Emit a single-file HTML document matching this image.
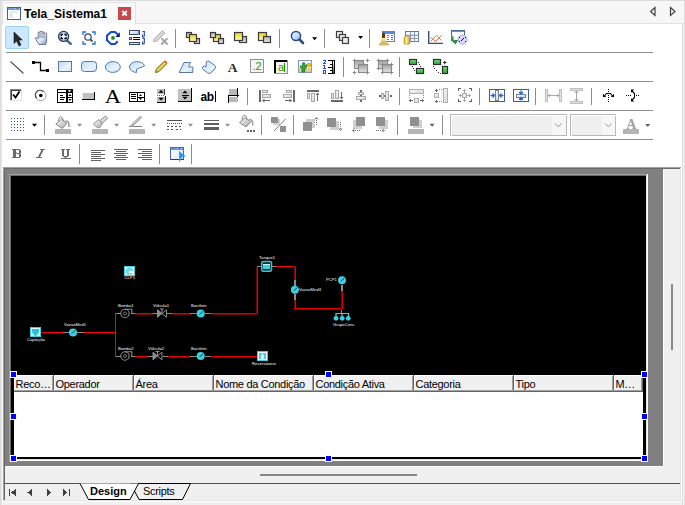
<!DOCTYPE html>
<html><head><meta charset="utf-8"><style>
html,body{margin:0;padding:0;width:685px;height:505px;overflow:hidden;background:#f0f0f0}
svg{position:absolute;left:0;top:0}
</style></head><body>
<svg width="685" height="505" viewBox="0 0 685 505" shape-rendering="crispEdges">
<rect x="0" y="0" width="685" height="505" fill="#f0f0f0" />
<rect x="0" y="0" width="1" height="505" fill="#dcdcdc" />
<rect x="1" y="0" width="1" height="505" fill="#e8e8e8" />
<rect x="2" y="0" width="1" height="505" fill="#f8f8f8" />
<rect x="0" y="0" width="685" height="1" fill="#dcdcdc" />
<rect x="3" y="1" width="681" height="22" fill="#f7f7f7" />
<rect x="3" y="23" width="681" height="1" fill="#e3e3e3" />
<rect x="3" y="2" width="132" height="23" fill="#f9f9f9" />
<rect x="2" y="2" width="1" height="23" fill="#e2e2e2" />
<rect x="2" y="2" width="134" height="1" fill="#e6e6e6" />
<rect x="135" y="2" width="1" height="23" fill="#e2e2e2" />
<rect x="682" y="24" width="1" height="481" fill="#dcdcdc" />
<rect x="683" y="24" width="1" height="481" fill="#f4f4f4" />
<rect x="684" y="0" width="1" height="505" fill="#e0e0e0" />
<rect x="3" y="24" width="679" height="143" fill="#ffffff" />
<rect x="6" y="52" width="647" height="1" fill="#8c8c8c" />
<rect x="6" y="81" width="647" height="1" fill="#8c8c8c" />
<rect x="6" y="110" width="647" height="1" fill="#8c8c8c" />
<rect x="6" y="139" width="647" height="1" fill="#8c8c8c" />
<rect x="3" y="167" width="678" height="334" fill="#f0f0f0" />
<rect x="3" y="167" width="678" height="1" fill="#a0a0a0" />
<rect x="3" y="167" width="1" height="334" fill="#a0a0a0" />
<rect x="4" y="168" width="676" height="1" fill="#696969" />
<rect x="4" y="168" width="1" height="332" fill="#696969" />
<rect x="5" y="169" width="658" height="297" fill="#808080" />
<rect x="663" y="169" width="1" height="298" fill="#ffffff" />
<rect x="5" y="466" width="659" height="1" fill="#ffffff" />
<rect x="9" y="174" width="639" height="1" fill="#a0a0a0" />
<rect x="9" y="174" width="1" height="287" fill="#a0a0a0" />
<rect x="10" y="175" width="637" height="1" fill="#696969" />
<rect x="10" y="175" width="1" height="285" fill="#696969" />
<rect x="10" y="460" width="638" height="1" fill="#ffffff" />
<rect x="647" y="174" width="1" height="287" fill="#ffffff" />
<rect x="11" y="459" width="636" height="1" fill="#e3e3e3" />
<rect x="646" y="175" width="1" height="285" fill="#e3e3e3" />
<rect x="11" y="176" width="635" height="283" fill="#000000" />
<rect x="664" y="169" width="16" height="297" fill="#f0f0f0" />
<rect x="671" y="284" width="2" height="66" fill="#888888" />
<rect x="5" y="467" width="675" height="16" fill="#f0f0f0" />
<rect x="260" y="474" width="157" height="2" fill="#888888" />
<rect x="5" y="483" width="676" height="1" fill="#505050" />
<rect x="680" y="169" width="1" height="332" fill="#e3e3e3" />
<rect x="681" y="167" width="1" height="335" fill="#ffffff" />
<rect x="3" y="500" width="679" height="1" fill="#e3e3e3" />
<rect x="3" y="501" width="679" height="1" fill="#ffffff" />
<rect x="14" y="375" width="629" height="17" fill="#f0f0f0" />
<rect x="14" y="375" width="629" height="1" fill="#ffffff" />
<rect x="14" y="375" width="1" height="16" fill="#ffffff" />
<rect x="52" y="376" width="1" height="15" fill="#a0a0a0" />
<rect x="53" y="375" width="1" height="17" fill="#646464" />
<rect x="54" y="375" width="1" height="16" fill="#ffffff" />
<rect x="132" y="376" width="1" height="15" fill="#a0a0a0" />
<rect x="133" y="375" width="1" height="17" fill="#646464" />
<rect x="134" y="375" width="1" height="16" fill="#ffffff" />
<rect x="212" y="376" width="1" height="15" fill="#a0a0a0" />
<rect x="213" y="375" width="1" height="17" fill="#646464" />
<rect x="214" y="375" width="1" height="16" fill="#ffffff" />
<rect x="312" y="376" width="1" height="15" fill="#a0a0a0" />
<rect x="313" y="375" width="1" height="17" fill="#646464" />
<rect x="314" y="375" width="1" height="16" fill="#ffffff" />
<rect x="412" y="376" width="1" height="15" fill="#a0a0a0" />
<rect x="413" y="375" width="1" height="17" fill="#646464" />
<rect x="414" y="375" width="1" height="16" fill="#ffffff" />
<rect x="512" y="376" width="1" height="15" fill="#a0a0a0" />
<rect x="513" y="375" width="1" height="17" fill="#646464" />
<rect x="514" y="375" width="1" height="16" fill="#ffffff" />
<rect x="612" y="376" width="1" height="15" fill="#a0a0a0" />
<rect x="613" y="375" width="1" height="17" fill="#646464" />
<rect x="614" y="375" width="1" height="16" fill="#ffffff" />
<rect x="641" y="376" width="1" height="15" fill="#a0a0a0" />
<rect x="642" y="375" width="1" height="17" fill="#646464" />
<rect x="14" y="390" width="628" height="1" fill="#a0a0a0" />
<rect x="14" y="391" width="629" height="1" fill="#646464" />
<rect x="14" y="392" width="629" height="65" fill="#ffffff" />
<g shape-rendering="auto">
<rect x="7" y="7" width="14" height="13" fill="#4a5f7e" />
<rect x="8" y="8" width="12" height="2" fill="#6f9be0" />
<rect x="8" y="10" width="12" height="9" fill="#ffffff" />
<path d="M9 18 L9 11 L18 11 L18 13 L13 13 L13 18 Z" fill="#e4ebf7"/>
<rect x="15" y="8" width="1" height="1" fill="#f4d040" />
<rect x="17" y="8" width="1" height="1" fill="#e02020" />
<rect x="19" y="8" width="1" height="1" fill="#f4d040" />
</g>
<text x="24" y="18" font-family="Liberation Sans, sans-serif" font-size="12" font-weight="bold" fill="#000" textLength="83" lengthAdjust="spacing">Tela_Sistema1</text>
<rect x="118" y="7" width="13" height="13" fill="#c9484a" />
<path d="M122.3 11 L126.8 15.5 M126.8 11 L122.3 15.5" stroke="#fff" stroke-width="1.8" shape-rendering="auto"/>
<path d="M655 7.5 L650.5 11.5 L655 15.5 Z" fill="none" stroke="#404040" stroke-width="1.2" shape-rendering="auto"/>
<path d="M670.5 7.5 L675 11.5 L670.5 15.5 Z" fill="none" stroke="#404040" stroke-width="1.2" shape-rendering="auto"/>
<text x="15.5" y="388" font-family="Liberation Sans, sans-serif" font-size="11" font-weight="normal" fill="#000" letter-spacing="-0.3">Reco…</text>
<text x="55.5" y="388" font-family="Liberation Sans, sans-serif" font-size="11" font-weight="normal" fill="#000" letter-spacing="-0.3">Operador</text>
<text x="135.5" y="388" font-family="Liberation Sans, sans-serif" font-size="11" font-weight="normal" fill="#000" letter-spacing="-0.3">Área</text>
<text x="215.5" y="388" font-family="Liberation Sans, sans-serif" font-size="11" font-weight="normal" fill="#000" letter-spacing="-0.3">Nome da Condição</text>
<text x="315.5" y="388" font-family="Liberation Sans, sans-serif" font-size="11" font-weight="normal" fill="#000" letter-spacing="-0.3">Condição Ativa</text>
<text x="415.5" y="388" font-family="Liberation Sans, sans-serif" font-size="11" font-weight="normal" fill="#000" letter-spacing="-0.3">Categoria</text>
<text x="515.5" y="388" font-family="Liberation Sans, sans-serif" font-size="11" font-weight="normal" fill="#000" letter-spacing="-0.3">Tipo</text>
<text x="615.5" y="388" font-family="Liberation Sans, sans-serif" font-size="11" font-weight="normal" fill="#000" letter-spacing="-0.3">M…</text>
<rect x="10" y="371" width="7" height="7" fill="#ffffff" />
<rect x="11" y="372" width="5" height="5" fill="#0000ff" />
<rect x="10" y="413" width="7" height="7" fill="#ffffff" />
<rect x="11" y="414" width="5" height="5" fill="#0000ff" />
<rect x="10" y="455" width="7" height="7" fill="#ffffff" />
<rect x="11" y="456" width="5" height="5" fill="#0000ff" />
<rect x="325" y="371" width="7" height="7" fill="#ffffff" />
<rect x="326" y="372" width="5" height="5" fill="#0000ff" />
<rect x="325" y="455" width="7" height="7" fill="#ffffff" />
<rect x="326" y="456" width="5" height="5" fill="#0000ff" />
<rect x="641" y="371" width="7" height="7" fill="#ffffff" />
<rect x="642" y="372" width="5" height="5" fill="#0000ff" />
<rect x="641" y="413" width="7" height="7" fill="#ffffff" />
<rect x="642" y="414" width="5" height="5" fill="#0000ff" />
<rect x="641" y="455" width="7" height="7" fill="#ffffff" />
<rect x="642" y="456" width="5" height="5" fill="#0000ff" />
<g fill="#404040">
<rect x="9" y="489" width="1" height="7" fill="#404040" />
<path d="M15.5 489 L11 492.5 L15.5 496 Z"/>
<path d="M32 489 L27.5 492.5 L32 496 Z"/>
<path d="M47 489 L51.5 492.5 L47 496 Z"/>
<path d="M63 489 L67.5 492.5 L63 496 Z"/>
<rect x="69" y="489" width="1" height="7" fill="#404040" />
</g>
<path d="M130.5 483.5 L190.5 483.5 L182.5 499.5 L139 499.5 Z" fill="#f0f0f0" stroke="#000" stroke-width="1" shape-rendering="auto"/>
<rect x="5" y="483" width="75" height="1" fill="#505050" />
<path d="M80 483.5 L88.5 499.5 L130 499.5 L138.5 483.5" fill="#ffffff" stroke="#000" stroke-width="1" shape-rendering="auto"/>
<text x="90" y="495" font-family="Liberation Sans, sans-serif" font-size="11" font-weight="bold" fill="#000" >Design</text>
<text x="143" y="495" font-family="Liberation Sans, sans-serif" font-size="11" font-weight="normal" fill="#000" letter-spacing="-0.3">Scripts</text>
<defs>
<linearGradient id="gy" x1="0" y1="0" x2="0" y2="1"><stop offset="0" stop-color="#e8d000"/><stop offset="1" stop-color="#fffbc8"/></linearGradient>
<linearGradient id="gg" x1="0" y1="0" x2="0" y2="1"><stop offset="0" stop-color="#a8a8a8"/><stop offset="1" stop-color="#ececec"/></linearGradient>
<linearGradient id="gb" x1="0" y1="0" x2="1" y2="1"><stop offset="0" stop-color="#b8d8f8"/><stop offset="0.6" stop-color="#e8f4ff"/><stop offset="1" stop-color="#c8e0f8"/></linearGradient>
<linearGradient id="ghand" x1="0" y1="0" x2="1" y2="1"><stop offset="0" stop-color="#ffffff"/><stop offset="0.55" stop-color="#e8eef8"/><stop offset="1" stop-color="#7890c0"/></linearGradient>
<linearGradient id="grul" x1="0" y1="0" x2="0" y2="1"><stop offset="0" stop-color="#ffffff"/><stop offset="1" stop-color="#2050d0"/></linearGradient>
<linearGradient id="gbell" x1="0" y1="0" x2="0" y2="1"><stop offset="0" stop-color="#fff4b0"/><stop offset="1" stop-color="#d8b850"/></linearGradient>
<linearGradient id="gcyl" x1="0" y1="0" x2="1" y2="0"><stop offset="0" stop-color="#d8a820"/><stop offset="0.4" stop-color="#fff0a0"/><stop offset="1" stop-color="#c89818"/></linearGradient>
<linearGradient id="gg2" x1="0" y1="0" x2="0" y2="1"><stop offset="0" stop-color="#a0a0a0"/><stop offset="1" stop-color="#e4e4e4"/></linearGradient>
<linearGradient id="gbk" x1="0" y1="0" x2="1" y2="1"><stop offset="0" stop-color="#ffffff"/><stop offset="1" stop-color="#a8a8a8"/></linearGradient>
<linearGradient id="gwin" x1="0" y1="0" x2="1" y2="1"><stop offset="0" stop-color="#ffffff"/><stop offset="1" stop-color="#dde4f4"/></linearGradient>
<linearGradient id="galn" x1="0" y1="0" x2="1" y2="1"><stop offset="0" stop-color="#fafafa"/><stop offset="1" stop-color="#d4d4d4"/></linearGradient>
<linearGradient id="gstk" x1="0" y1="0" x2="1" y2="1"><stop offset="0" stop-color="#ffffff"/><stop offset="1" stop-color="#d0d0d0"/></linearGradient>
<radialGradient id="gzm" cx="0.5" cy="0.5" r="0.5"><stop offset="0" stop-color="#ffffff"/><stop offset="1" stop-color="#b8c8f0"/></radialGradient>
<linearGradient id="glst" x1="0" y1="0" x2="1" y2="1"><stop offset="0" stop-color="#ffffff"/><stop offset="1" stop-color="#a8c4ec"/></linearGradient>
<linearGradient id="gb2" x1="0" y1="0" x2="0" y2="1"><stop offset="0" stop-color="#ffffff"/><stop offset="1" stop-color="#a8c0e0"/></linearGradient>
<linearGradient id="gmag" x1="0" y1="0" x2="1" y2="1"><stop offset="0" stop-color="#ffffff"/><stop offset="1" stop-color="#90b8f0"/></linearGradient>
<linearGradient id="ggr" x1="0" y1="0" x2="0" y2="1"><stop offset="0" stop-color="#80e080"/><stop offset="1" stop-color="#30a030"/></linearGradient>
</defs>
<rect x="5.5" y="26.5" width="23" height="22" rx="2" fill="#cce8ff" stroke="#99d1ff"/>
<path d="M14 32 L14 43.5 L16.6 41 L19 46 L21 45 L18.7 40 L22.3 40 Z" fill="#2a2a2a" stroke="#101010" stroke-width="0.6" shape-rendering="auto"/>
<path d="M39 44.5 L35.3 38.6 L35.9 37.3 L38.2 38.9 V32.4 Q39 31.6 39.9 32.4 V31.6 Q40.9 30.8 41.9 31.6 V32.1 Q42.9 31.4 43.9 32.1 V33.2 Q45.1 32.6 46.6 33.4 V42 L45.5 44.5 Z" fill="url(#ghand)" stroke="#5a6a84" stroke-width="0.9" shape-rendering="auto"/>
<path d="M40 32.5 V38 M42 32.2 V38 M44 33.2 V38" stroke="#5a6a84" stroke-width="0.8" shape-rendering="auto"/>
<path d="M67 40.5 L70.8 44" stroke="#4a6a9a" stroke-width="2.4" stroke-linecap="round" shape-rendering="auto"/>
<circle cx="63.6" cy="36.4" r="5" fill="url(#gzm)" stroke="#2a3a68" stroke-width="1.3" shape-rendering="auto"/>
<path d="M61.3 36 V34.3 H63 M64.3 34.3 H66 V36 M66 37 V38.7 H64.3 M63 38.7 H61.3 V37" stroke="#000" stroke-width="1.3" fill="none" shape-rendering="auto"/>
<path d="M83 35 V32 H86 M92 32 H95 V35 M95 41 V44 H92 M86 44 H83 V41" stroke="#1a70e0" stroke-width="1.3" fill="none" shape-rendering="auto"/>
<circle cx="88" cy="37" r="3.2" fill="#f0f4fa" stroke="#404a60" stroke-width="1.2" shape-rendering="auto"/>
<path d="M90.3 39.3 L92.5 41.5" stroke="#404a60" stroke-width="1.8" shape-rendering="auto"/>
<path d="M117.8 41.3 L115 44 H111 L107 40.3 V35.5 L111 32 H115 L118 34.6" stroke="#1a44e0" stroke-width="2" fill="none" shape-rendering="auto"/>
<path d="M119.8 32.3 V36.9 H115.3 Z" fill="#061a90" shape-rendering="auto"/>
<circle cx="113" cy="37.9" r="1.9" fill="#109020" shape-rendering="auto"/>
<rect x="129.5" y="30.5" width="10" height="4" fill="url(#glst)" stroke="#3a4a6a" stroke-width="1"/>
<rect x="138" y="31" width="1" height="4" fill="#8090a8" />
<rect x="129" y="37" width="3" height="3" fill="#3a4a6a" />
<rect x="130" y="38" width="1" height="1" fill="#d0d8e8" />
<rect x="133" y="37" width="7" height="1" fill="#000" />
<rect x="133" y="39" width="7" height="1" fill="#000" />
<rect x="129.5" y="42.5" width="10" height="2" fill="url(#glst)" stroke="#3a4a6a" stroke-width="1"/>
<path d="M142.5 31.5 H144.3 V36.5 M142.5 34.5 V37 H144.3 M142.5 38.5 H144.3 V43.5 M142.5 41.5 V44 H144.3" stroke="#1a40a0" stroke-width="1.1" fill="none" shape-rendering="auto"/>
<path d="M153.4 41.6 L154.1 38.7 L162.4 30.5 L165 33.1 L156.7 41.3 Z" fill="#d4d4d4" stroke="#a8a8a8" stroke-width="0.8" shape-rendering="auto"/>
<path d="M161.3 38.2 L167.6 44.5 M167.6 38.2 L161.3 44.5" stroke="#a4a4a4" stroke-width="1.9" shape-rendering="auto"/>
<rect x="175" y="29" width="1" height="19" fill="#8c8c8c" />
<rect x="186.5" y="32.5" width="5" height="5" fill="url(#gg)" stroke="#3a3a3a" stroke-width="1.2" shape-rendering="auto"/>
<rect x="194.5" y="38.5" width="5" height="5" fill="url(#gg)" stroke="#3a3a3a" stroke-width="1.2" shape-rendering="auto"/>
<rect x="189.5" y="34.5" width="7" height="7" fill="url(#gy)" stroke="#3a3a3a" stroke-width="1.2" shape-rendering="auto"/>
<rect x="213.5" y="34.5" width="7" height="7" fill="url(#gy)" stroke="#3a3a3a" stroke-width="1.2" shape-rendering="auto"/>
<rect x="210.5" y="32.5" width="5" height="5" fill="url(#gg)" stroke="#3a3a3a" stroke-width="1.2" shape-rendering="auto"/>
<rect x="218.5" y="38.5" width="5" height="5" fill="url(#gg)" stroke="#3a3a3a" stroke-width="1.2" shape-rendering="auto"/>
<rect x="239.5" y="36.5" width="7" height="6" fill="url(#gg)" stroke="#3a3a3a" stroke-width="1.2" shape-rendering="auto"/>
<rect x="234.5" y="32.5" width="8" height="8" fill="url(#gy)" stroke="#3a3a3a" stroke-width="1.2" shape-rendering="auto"/>
<rect x="258.5" y="32.5" width="8" height="8" fill="url(#gy)" stroke="#3a3a3a" stroke-width="1.2" shape-rendering="auto"/>
<rect x="263.5" y="36.5" width="7" height="6" fill="url(#gg)" stroke="#3a3a3a" stroke-width="1.2" shape-rendering="auto"/>
<rect x="279" y="29" width="1" height="19" fill="#8c8c8c" />
<circle cx="296" cy="36" r="4.6" fill="url(#gmag)" stroke="#2a4a8a" stroke-width="1.5" shape-rendering="auto"/>
<path d="M299.5 39.5 L303 43" stroke="#2a4a8a" stroke-width="2.6" stroke-linecap="round" shape-rendering="auto"/>
<path d="M312.1 37.2 L317.1 37.2 L314.6 40.2 Z" fill="#000" shape-rendering="auto"/>
<rect x="324" y="29" width="1" height="19" fill="#8c8c8c" />
<rect x="336.5" y="31.5" width="6" height="6" fill="url(#gstk)" stroke="#404040" stroke-width="1.2" shape-rendering="auto"/>
<rect x="339.5" y="34.5" width="6" height="6" fill="url(#gstk)" stroke="#404040" stroke-width="1.2" shape-rendering="auto"/>
<rect x="342.5" y="37.5" width="6" height="6" fill="url(#gstk)" stroke="#404040" stroke-width="1.2" shape-rendering="auto"/>
<path d="M358.1 36.0 L363.1 36.0 L360.6 39.0 Z" fill="#000" shape-rendering="auto"/>
<rect x="369" y="29" width="1" height="19" fill="#8c8c8c" />
<rect x="382.5" y="31.5" width="12" height="10" fill="#ffffff" stroke="#7080a8" stroke-width="1"/>
<rect x="383" y="32" width="11" height="2" fill="#5a8ae0" />
<rect x="387" y="35" width="2" height="1" fill="#f05030" />
<rect x="391" y="35" width="2" height="1" fill="#f05030" />
<rect x="387" y="37" width="2" height="1" fill="#f05030" />
<rect x="391" y="37" width="2" height="1" fill="#3070e0" />
<rect x="387" y="39" width="2" height="1" fill="#f05030" />
<rect x="391" y="39" width="2" height="1" fill="#f05030" />
<rect x="387" y="37" width="2" height="1" fill="#80a8e0" />
<path d="M382 38.5 V33.5 Q383.5 31.5 385 33.5 V38.5 Z" fill="#70300a" shape-rendering="auto"/>
<path d="M381 38 H386 V43 H381 Z" fill="url(#gbell)" shape-rendering="auto"/>
<path d="M379 45 Q379.5 43 381 43 H386 Q388.5 43 389 45 Z" fill="#e0c870" stroke="#b09040" stroke-width="0.5" shape-rendering="auto"/>
<rect x="405.5" y="31.5" width="13" height="10" fill="#d8e4f8" stroke="#6a7a9a" stroke-width="1"/>
<rect x="410" y="32" width="1" height="10" fill="#8a9ac0" />
<rect x="414" y="32" width="1" height="10" fill="#8a9ac0" />
<rect x="406" y="35" width="13" height="1" fill="#8a9ac0" />
<rect x="406" y="38" width="13" height="1" fill="#8a9ac0" />
<rect x="406" y="32" width="4" height="2" fill="#f4f8ff" />
<rect x="406" y="36" width="4" height="2" fill="#f4f8ff" />
<rect x="406" y="39" width="4" height="2" fill="#f4f8ff" />
<rect x="411" y="32" width="3" height="2" fill="#f4f8ff" />
<rect x="411" y="36" width="3" height="2" fill="#f4f8ff" />
<rect x="411" y="39" width="3" height="2" fill="#f4f8ff" />
<rect x="415" y="32" width="3" height="2" fill="#f4f8ff" />
<rect x="415" y="36" width="3" height="2" fill="#f4f8ff" />
<rect x="415" y="39" width="3" height="2" fill="#f4f8ff" />
<path d="M404 37 Q407 35.5 410 37 V43.8 Q407 45 404 43.8 Z" fill="url(#gcyl)" stroke="#b89020" stroke-width="0.6" shape-rendering="auto"/>
<path d="M428.7 31 V43.4 H443" stroke="#3a5070" stroke-width="1.4" fill="none" shape-rendering="auto"/>
<path d="M430.5 37.3 L435.5 41.5 L441.5 35.3" stroke="#f05030" stroke-width="0.9" fill="none" shape-rendering="auto"/>
<path d="M430.5 41.5 L436.5 35.3 L441.5 40.3" stroke="#50c020" stroke-width="0.9" fill="none" shape-rendering="auto"/>
<rect x="451.5" y="30.5" width="13" height="10" fill="#ffffff" stroke="#4a68a0" stroke-width="1"/>
<rect x="452" y="31" width="12" height="1" fill="#6a90d8" />
<path d="M452.5 36 V39 Q453 42 455.5 42.5" stroke="#40a040" stroke-width="2" fill="none" shape-rendering="auto"/>
<path d="M453 41 L458 40.5 L455.5 44.5 Z" fill="#309030" shape-rendering="auto"/>
<circle cx="462.5" cy="39.6" r="4.6" fill="#d8d8f8" stroke="#a8a8e0" stroke-width="1" shape-rendering="auto"/>
<path d="M461 41 L464 38" stroke="#101010" stroke-width="1" shape-rendering="auto"/>
<rect x="459" y="37" width="1" height="1" fill="#202020" />
<rect x="465" y="37" width="1" height="1" fill="#202020" />
<rect x="459" y="41" width="1" height="1" fill="#202020" />
<rect x="465" y="41" width="1" height="1" fill="#202020" />
<path d="M10.5 61.5 L23.5 73.5" stroke="#505050" stroke-width="1.1" shape-rendering="auto"/>
<path d="M34 62.5 H40.5 V70.5 H47" stroke="#000" stroke-width="1.3" fill="none" shape-rendering="auto"/>
<rect x="32" y="61" width="3" height="3" fill="#000" />
<rect x="46" y="69" width="3" height="3" fill="#000" />
<rect x="58.5" y="61.5" width="13" height="10" fill="url(#gb)" stroke="#5878a8" stroke-width="1" shape-rendering="auto"/>
<rect x="81.5" y="61.5" width="15" height="10" rx="3" fill="url(#gb)" stroke="#5878a8" stroke-width="1" shape-rendering="auto"/>
<ellipse cx="112.8" cy="67" rx="7.5" ry="5.4" fill="url(#gb)" stroke="#5878a8" stroke-width="1" shape-rendering="auto"/>
<path d="M144.5 66 A7.6 5.4 0 1 0 136.6 72.4 L136.6 69 Z" fill="url(#gb)" stroke="#5878a8" stroke-width="1" shape-rendering="auto"/>
<path d="M155.5 72.5 L156.3 69.2 L164.2 61.3 L166.7 63.8 L158.8 71.7 Z" fill="#f0d040" stroke="#505020" stroke-width="0.9" shape-rendering="auto"/>
<path d="M164.2 61.3 L165.2 60.3 L167.7 62.8 L166.7 63.8 Z" fill="#e06050" shape-rendering="auto"/>
<path d="M184 62.5 H190.5 L188.5 67 H192.8 V72.5 H179.2 Z" fill="url(#gb)" stroke="#5878a8" stroke-width="1" shape-rendering="auto"/>
<path d="M206.3 62.2 Q207 60.3 208.8 61.2 L214.6 65.3 Q216.6 67 214.7 69.4 L210.8 72.8 Q209.2 74.2 207.6 72.8 L203.2 69.6 Q201.6 68.2 203 66.6 Q204.6 65.6 206 66.8 Z" fill="url(#gb)" stroke="#5878a8" stroke-width="1" shape-rendering="auto"/>
<text x="232.7" y="71.6" font-family="Liberation Serif" font-weight="bold" font-size="13.5" fill="#2a2a2a" text-anchor="middle">A</text>
<rect x="250.5" y="59.5" width="13" height="13" fill="#f4f4f4" stroke="#909090" stroke-width="1"/>
<text x="257" y="70" font-family="Liberation Sans" font-size="11" fill="#10a010" text-anchor="middle">.2</text>
<rect x="274" y="60" width="14" height="14" fill="#f4f4f4" />
<rect x="274" y="60" width="14" height="2" fill="#000" />
<rect x="274" y="60" width="2" height="14" fill="#000" />
<rect x="287" y="60" width="1" height="14" fill="#909090" />
<rect x="274" y="73" width="14" height="1" fill="#909090" />
<text x="278" y="71" font-family="Liberation Sans" font-size="11" fill="#10a010">a</text>
<rect x="284" y="63" width="1" height="9" fill="#10a010" />
<rect x="298.5" y="60.5" width="13" height="12" fill="#f4f6fc" stroke="#8898b8" stroke-width="1"/>
<rect x="299" y="68" width="12" height="4" fill="#e4cc88" />
<path d="M302 72 V68.5 Q300 68 300.3 65.5 Q301.5 66.5 302.5 66.5 V63 Q303.5 61.8 304.8 63 V66 Q306 65.5 306.5 64.5 Q307.5 67.5 304.8 69 V72 Z" fill="#30a838" stroke="#107020" stroke-width="0.7" shape-rendering="auto"/>
<circle cx="309" cy="65" r="1.9" fill="#f0c020" stroke="#b08818" stroke-width="0.5" shape-rendering="auto"/>
<rect x="323" y="60" width="3" height="1" fill="#1f4fd8" />
<rect x="325" y="61" width="1" height="1" fill="#1f4fd8" />
<rect x="324" y="62" width="1" height="1" fill="#1f4fd8" />
<rect x="323" y="63" width="3" height="1" fill="#1f4fd8" />
<rect x="324" y="65" width="1" height="4" fill="#1f4fd8" />
<rect x="323" y="65" width="1" height="1" fill="#1f4fd8" />
<rect x="323" y="68" width="3" height="1" fill="#1f4fd8" />
<rect x="323" y="70" width="3" height="1" fill="#1f4fd8" />
<rect x="323" y="73" width="3" height="1" fill="#1f4fd8" />
<rect x="323" y="70" width="1" height="4" fill="#1f4fd8" />
<rect x="325" y="70" width="1" height="4" fill="#1f4fd8" />
<rect x="328" y="60" width="7" height="1" fill="#000" />
<rect x="330" y="64" width="3" height="1" fill="#000" />
<rect x="328" y="67" width="5" height="1" fill="#000" />
<rect x="330" y="70" width="3" height="1" fill="#000" />
<rect x="328" y="73" width="7" height="1" fill="#000" />
<rect x="332" y="60" width="3" height="14" fill="#000" />
<rect x="333" y="61" width="1" height="12" fill="url(#grul)" />
<rect x="343" y="57" width="1" height="20" fill="#8c8c8c" />
<rect x="354.5" y="60.5" width="9" height="8" fill="url(#gg2)" stroke="#8a8a8a" stroke-width="1.2" shape-rendering="auto"/>
<rect x="358.5" y="64.5" width="9" height="8" fill="url(#gg2)" stroke="#8a8a8a" stroke-width="1.2" shape-rendering="auto"/>
<path d="M352.7 60.5 H356.3 M354.5 58.7 V62.3" stroke="#888" stroke-width="1" shape-rendering="auto"/>
<path d="M365.7 60.5 H369.3 M367.5 58.7 V62.3" stroke="#888" stroke-width="1" shape-rendering="auto"/>
<path d="M352.7 72.5 H356.3 M354.5 70.7 V74.3" stroke="#888" stroke-width="1" shape-rendering="auto"/>
<path d="M365.7 72.5 H369.3 M367.5 70.7 V74.3" stroke="#888" stroke-width="1" shape-rendering="auto"/>
<rect x="378.5" y="60.5" width="9" height="8" fill="url(#gg2)" stroke="#8a8a8a" stroke-width="1.2" shape-rendering="auto"/>
<rect x="382.5" y="64.5" width="9" height="8" fill="url(#gg2)" stroke="#8a8a8a" stroke-width="1.2" shape-rendering="auto"/>
<path d="M376.7 60.5 H380.3 M378.5 58.7 V62.3" stroke="#888" stroke-width="1" shape-rendering="auto"/>
<path d="M385.7 60.5 H389.3 M387.5 58.7 V62.3" stroke="#888" stroke-width="1" shape-rendering="auto"/>
<path d="M376.7 68.5 H380.3 M378.5 66.7 V70.3" stroke="#888" stroke-width="1" shape-rendering="auto"/>
<path d="M380.7 64.5 H384.3 M382.5 62.7 V66.3" stroke="#888" stroke-width="1" shape-rendering="auto"/>
<path d="M389.7 64.5 H393.3 M391.5 62.7 V66.3" stroke="#888" stroke-width="1" shape-rendering="auto"/>
<path d="M380.7 72.5 H384.3 M382.5 70.7 V74.3" stroke="#888" stroke-width="1" shape-rendering="auto"/>
<path d="M389.7 72.5 H393.3 M391.5 70.7 V74.3" stroke="#888" stroke-width="1" shape-rendering="auto"/>
<rect x="399" y="57" width="1" height="20" fill="#8c8c8c" />
<rect x="409.5" y="59.5" width="7" height="5" fill="url(#ggr)" stroke="#303030" stroke-width="1.2" shape-rendering="auto"/>
<rect x="416.5" y="68.5" width="7" height="5" fill="url(#ggr)" stroke="#303030" stroke-width="1.2" shape-rendering="auto"/>
<rect x="412" y="66" width="1" height="1" fill="#303030" />
<rect x="413" y="68" width="1" height="1" fill="#303030" />
<rect x="414" y="70" width="1" height="1" fill="#303030" />
<rect x="418" y="62" width="1" height="1" fill="#303030" />
<rect x="419" y="64" width="1" height="1" fill="#303030" />
<rect x="420" y="66" width="1" height="1" fill="#303030" />
<rect x="433.5" y="59.5" width="7" height="5" fill="url(#ggr)" stroke="#303030" stroke-width="1.2" shape-rendering="auto"/>
<rect x="442.5" y="66.5" width="5" height="7" fill="url(#ggr)" stroke="#303030" stroke-width="1.2" shape-rendering="auto"/>
<rect x="433" y="66" width="1" height="1" fill="#303030" />
<rect x="434" y="68" width="1" height="1" fill="#303030" />
<rect x="436" y="70" width="1" height="1" fill="#303030" />
<rect x="438" y="72" width="1" height="1" fill="#303030" />
<rect x="440" y="73" width="1" height="1" fill="#303030" />
<path d="M443 62.5 H446.5 M444.7 60.7 V64.3" stroke="#303030" stroke-width="1.1" shape-rendering="auto"/>
<rect x="10" y="89" width="12" height="12" fill="#ffffff" />
<rect x="10" y="89" width="12" height="1" fill="#808080" />
<rect x="10" y="89" width="1" height="12" fill="#808080" />
<rect x="11" y="90" width="10" height="1" fill="#404040" />
<rect x="11" y="90" width="1" height="10" fill="#404040" />
<rect x="10" y="100" width="12" height="1" fill="#e0e0e0" />
<rect x="21" y="89" width="1" height="12" fill="#e0e0e0" />
<path d="M13 94.5 L15.5 97.5 L19.5 91.5" stroke="#000" stroke-width="1.8" fill="none" shape-rendering="auto"/>
<circle cx="40.8" cy="95.5" r="5.2" fill="#fff" stroke="#a0a0a0" stroke-width="1" shape-rendering="auto"/>
<path d="M36.5 98 A4.5 4.5 0 0 1 43.5 91.8" stroke="#404040" stroke-width="1.2" fill="none" shape-rendering="auto"/>
<circle cx="40.8" cy="95.5" r="1.8" fill="#000" shape-rendering="auto"/>
<rect x="57" y="89" width="16" height="14" fill="#000" />
<rect x="58" y="90" width="8" height="2" fill="#ffffff" />
<path d="M67.6 90.2 H71.4 L69.5 92.2 Z" fill="#fff" shape-rendering="auto"/>
<rect x="58" y="93" width="8" height="9" fill="#ffffff" />
<rect x="60" y="95" width="3" height="1" fill="#000" />
<rect x="60" y="97" width="5" height="1" fill="#000" />
<rect x="60" y="99" width="4" height="1" fill="#000" />
<rect x="68" y="93" width="4" height="4" fill="#ffffff" />
<rect x="68" y="98" width="4" height="4" fill="#ffffff" />
<path d="M68.3 96 L70 94 L71.7 96 Z M68.3 99 L70 101 L71.7 99 Z" fill="#000" shape-rendering="auto"/>
<rect x="82" y="92" width="13" height="8" fill="#000" />
<rect x="83" y="93" width="11" height="6" fill="#c0c0c0" />
<rect x="82" y="92" width="12" height="1" fill="#ffffff" />
<rect x="82" y="92" width="1" height="7" fill="#e8e8e8" />
<text x="104.8" y="102.8" font-family="Liberation Serif" font-size="19.5" fill="#000" textLength="16.3" lengthAdjust="spacingAndGlyphs">A</text>
<rect x="129" y="92" width="16" height="10" fill="#000" />
<rect x="130" y="93" width="14" height="8" fill="#fff" />
<rect x="137" y="93" width="1" height="8" fill="#000" />
<rect x="131" y="94" width="5" height="1" fill="#000" />
<rect x="131" y="96" width="5" height="1" fill="#000" />
<rect x="131" y="98" width="5" height="1" fill="#000" />
<path d="M139 96 L140.5 94 L142 96 Z M139 98 L140.5 100 L142 98 Z" fill="#000" shape-rendering="auto"/>
<rect x="138" y="97" width="6" height="1" fill="#000" />
<rect x="157" y="89" width="8" height="5" fill="#c0c0c0" />
<rect x="164" y="89" width="1" height="6" fill="#404040" />
<path d="M158.3 92.8 L161 90 L163.7 92.8 Z" fill="#000" shape-rendering="auto"/>
<rect x="157" y="95" width="1" height="1" fill="#606060" />
<rect x="159" y="95" width="1" height="1" fill="#606060" />
<rect x="161" y="95" width="1" height="1" fill="#606060" />
<rect x="163" y="95" width="1" height="1" fill="#606060" />
<rect x="157" y="97" width="8" height="5" fill="#c0c0c0" />
<rect x="157" y="102" width="9" height="1" fill="#000" />
<rect x="165" y="96" width="1" height="7" fill="#000" />
<path d="M158.3 97.7 L161 100.5 L163.7 97.7 Z" fill="#000" shape-rendering="auto"/>
<rect x="178" y="89" width="13" height="12" fill="#c0c0c0" />
<rect x="191" y="88" width="1" height="14" fill="#000" />
<rect x="178" y="101" width="14" height="1" fill="#000" />
<path d="M182.3 93.3 L185 90.5 L187.7 93.3 Z M182.3 96.7 L185 99.5 L187.7 96.7 Z" fill="#000" shape-rendering="auto"/>
<rect x="182" y="95" width="7" height="1" fill="#000" />
<text x="200.5" y="101.2" font-family="Liberation Sans" font-weight="bold" font-size="12" fill="#000" letter-spacing="-0.4">ab</text>
<rect x="215" y="91" width="1" height="11" fill="#000" />
<rect x="229" y="89" width="8" height="6" fill="#b8b8b8" />
<rect x="237" y="88" width="1" height="9" fill="#000" />
<rect x="228" y="95" width="11" height="1" fill="#000" />
<rect x="229" y="97" width="9" height="5" fill="#b8b8b8" />
<rect x="228" y="95" width="1" height="8" fill="#000" />
<rect x="247" y="88" width="1" height="17" fill="#8c8c8c" />
<rect x="259" y="90" width="2" height="12" fill="#6a6a6a" />
<rect x="262.5" y="90.5" width="5" height="2" fill="url(#galn)" stroke="#a8a8a8" stroke-width="1"/>
<rect x="262.5" y="94.5" width="8" height="3" fill="url(#galn)" stroke="#a8a8a8" stroke-width="1"/>
<rect x="263" y="100" width="7" height="1" fill="#6a6a6a" />
<path d="M262 100.5 L264.5 98.5 V102.5 Z" fill="#6a6a6a" shape-rendering="auto"/>
<rect x="293" y="90" width="2" height="12" fill="#6a6a6a" />
<rect x="286.5" y="90.5" width="5" height="2" fill="url(#galn)" stroke="#a8a8a8" stroke-width="1"/>
<rect x="283.5" y="94.5" width="8" height="3" fill="url(#galn)" stroke="#a8a8a8" stroke-width="1"/>
<rect x="285" y="100" width="7" height="1" fill="#6a6a6a" />
<path d="M292 100.5 L289.5 98.5 V102.5 Z" fill="#6a6a6a" shape-rendering="auto"/>
<rect x="307" y="90" width="12" height="2" fill="#6a6a6a" />
<rect x="307.5" y="93.5" width="2" height="5" fill="url(#galn)" stroke="#a8a8a8" stroke-width="1"/>
<rect x="311.5" y="93.5" width="3" height="8" fill="url(#galn)" stroke="#a8a8a8" stroke-width="1"/>
<rect x="317" y="94" width="1" height="7" fill="#6a6a6a" />
<path d="M317.5 92.5 L315.5 95 H319.5 Z" fill="#6a6a6a" shape-rendering="auto"/>
<rect x="331" y="100" width="12" height="2" fill="#6a6a6a" />
<rect x="331.5" y="93.5" width="2" height="5" fill="url(#galn)" stroke="#a8a8a8" stroke-width="1"/>
<rect x="335.5" y="90.5" width="3" height="8" fill="url(#galn)" stroke="#a8a8a8" stroke-width="1"/>
<rect x="341" y="92" width="1" height="6" fill="#6a6a6a" />
<path d="M341.5 99.5 L339.5 97 H343.5 Z" fill="#6a6a6a" shape-rendering="auto"/>
<rect x="360" y="90" width="2" height="2" fill="#6a6a6a" />
<rect x="360" y="95" width="2" height="1" fill="#6a6a6a" />
<rect x="360" y="100" width="2" height="2" fill="#6a6a6a" />
<rect x="358.5" y="92.5" width="5" height="2" fill="url(#galn)" stroke="#a8a8a8" stroke-width="1"/>
<rect x="356.5" y="96.5" width="9" height="3" fill="url(#galn)" stroke="#a8a8a8" stroke-width="1"/>
<rect x="379" y="95" width="2" height="2" fill="#6a6a6a" />
<rect x="390" y="95" width="2" height="2" fill="#6a6a6a" />
<rect x="384" y="95" width="1" height="2" fill="#6a6a6a" />
<rect x="381.5" y="93.5" width="2" height="5" fill="url(#galn)" stroke="#a8a8a8" stroke-width="1"/>
<rect x="385.5" y="91.5" width="3" height="9" fill="url(#galn)" stroke="#a8a8a8" stroke-width="1"/>
<rect x="399" y="88" width="1" height="17" fill="#8c8c8c" />
<rect x="409.5" y="89.5" width="14" height="4" fill="url(#galn)" stroke="#b0b0b0" stroke-width="1"/>
<rect x="409" y="95" width="1" height="1" fill="#808080" />
<rect x="423" y="95" width="1" height="1" fill="#808080" />
<rect x="409" y="97" width="1" height="1" fill="#808080" />
<rect x="423" y="97" width="1" height="1" fill="#808080" />
<rect x="414.5" y="98.5" width="4" height="4" fill="url(#galn)" stroke="#b0b0b0" stroke-width="1"/>
<rect x="409" y="100" width="4" height="1" fill="#6a6a6a" />
<rect x="410" y="99" width="1" height="3" fill="#6a6a6a" />
<rect x="420" y="100" width="4" height="1" fill="#6a6a6a" />
<rect x="422" y="99" width="1" height="3" fill="#6a6a6a" />
<rect x="443.5" y="88.5" width="4" height="14" fill="url(#galn)" stroke="#b0b0b0" stroke-width="1"/>
<rect x="434.5" y="93.5" width="4" height="4" fill="url(#galn)" stroke="#b0b0b0" stroke-width="1"/>
<rect x="435" y="90" width="3" height="1" fill="#6a6a6a" />
<rect x="436" y="89" width="1" height="3" fill="#6a6a6a" />
<rect x="435" y="101" width="3" height="1" fill="#6a6a6a" />
<rect x="436" y="100" width="1" height="3" fill="#6a6a6a" />
<rect x="439" y="89" width="1" height="1" fill="#808080" />
<rect x="441" y="89" width="1" height="1" fill="#808080" />
<rect x="439" y="101" width="1" height="1" fill="#808080" />
<rect x="441" y="101" width="1" height="1" fill="#808080" />
<path d="M458.5 91 V88.5 H461 M469 88.5 H471.5 V91 M471.5 99 V101.5 H469 M461 101.5 H458.5 V99" stroke="#606060" fill="none"/>
<rect x="462.5" y="93.5" width="4" height="4" fill="url(#galn)" stroke="#b0b0b0" stroke-width="1"/>
<rect x="464" y="89" width="1" height="4" fill="#a8a8a8" />
<rect x="463" y="90" width="3" height="1" fill="#a8a8a8" />
<rect x="464" y="98" width="1" height="4" fill="#a8a8a8" />
<rect x="463" y="100" width="3" height="1" fill="#a8a8a8" />
<rect x="459" y="95" width="3" height="1" fill="#a8a8a8" />
<rect x="460" y="94" width="1" height="3" fill="#a8a8a8" />
<rect x="467" y="95" width="4" height="1" fill="#a8a8a8" />
<rect x="469" y="94" width="1" height="3" fill="#a8a8a8" />
<rect x="479" y="88" width="1" height="17" fill="#8c8c8c" />
<rect x="489.5" y="89.5" width="15" height="12" fill="#ffffff" stroke="#406090" stroke-width="1"/>
<rect x="495.5" y="90.5" width="3" height="10" fill="url(#galn)" stroke="#808080"/>
<path d="M490.5 95.5 H494 M492.5 93.5 L494.5 95.5 L492.5 97.5 M503.5 95.5 H500 M501.5 93.5 L499.5 95.5 L501.5 97.5" stroke="#1a68e8" stroke-width="1.3" fill="none" shape-rendering="auto"/>
<rect x="513.5" y="89.5" width="15" height="12" fill="#ffffff" stroke="#406090" stroke-width="1"/>
<rect x="516.5" y="94.5" width="9" height="3" fill="url(#galn)" stroke="#808080"/>
<path d="M521 90.5 V94 M519 92 L521 94 L523 92 M521 100.5 V98 M519 99.5 L521 97.5 L523 99.5" stroke="#1a68e8" stroke-width="1.3" fill="none" shape-rendering="auto"/>
<rect x="535" y="88" width="1" height="17" fill="#8c8c8c" />
<rect x="545.5" y="89.5" width="2" height="12" fill="#e0e0e0" stroke="#c0c0c0"/>
<rect x="559.5" y="89.5" width="2" height="12" fill="#e0e0e0" stroke="#c0c0c0"/>
<path d="M548 95.5 H559 M550 93.5 L548 95.5 L550 97.5 M557 93.5 L559 95.5 L557 97.5" stroke="#a8a8a8" fill="none" shape-rendering="auto"/>
<rect x="570.5" y="88.5" width="12" height="2" fill="#e0e0e0" stroke="#c0c0c0"/>
<rect x="570.5" y="101.5" width="12" height="2" fill="#e0e0e0" stroke="#c0c0c0"/>
<path d="M576.5 91 V101 M574.5 93 L576.5 91 L578.5 93 M574.5 99 L576.5 101 L578.5 99" stroke="#a8a8a8" fill="none" shape-rendering="auto"/>
<rect x="591" y="88" width="1" height="17" fill="#8c8c8c" />
<rect x="608" y="89" width="1" height="1" fill="#000" />
<rect x="608" y="91" width="1" height="1" fill="#000" />
<rect x="608" y="95" width="1" height="1" fill="#000" />
<rect x="608" y="97" width="1" height="1" fill="#000" />
<rect x="608" y="99" width="1" height="1" fill="#000" />
<rect x="608" y="101" width="1" height="1" fill="#000" />
<path d="M604.5 96 L606.5 93.5 H610.5 L612.5 96" stroke="#000" stroke-width="1.1" fill="none" shape-rendering="auto"/>
<path d="M603 93.8 V97 H606.2 Z M614 93.8 V97 H610.8 Z" fill="#000" shape-rendering="auto"/>
<rect x="626" y="95" width="1" height="1" fill="#000" />
<rect x="628" y="95" width="1" height="1" fill="#000" />
<rect x="630" y="95" width="1" height="1" fill="#000" />
<rect x="636" y="95" width="1" height="1" fill="#000" />
<rect x="638" y="95" width="1" height="1" fill="#000" />
<path d="M632 91 L634.5 93.5 V97.5 L632 100" stroke="#000" stroke-width="1.1" fill="none" shape-rendering="auto"/>
<path d="M631 89.5 H634.2 L631 92.7 Z M631 101.5 H634.2 L631 98.3 Z" fill="#000" shape-rendering="auto"/>
<rect x="11" y="118" width="1" height="1" fill="#3a5080" />
<rect x="11" y="121" width="1" height="1" fill="#3a5080" />
<rect x="11" y="124" width="1" height="1" fill="#3a5080" />
<rect x="11" y="127" width="1" height="1" fill="#3a5080" />
<rect x="11" y="130" width="1" height="1" fill="#3a5080" />
<rect x="14" y="118" width="1" height="1" fill="#3a5080" />
<rect x="14" y="121" width="1" height="1" fill="#3a5080" />
<rect x="14" y="124" width="1" height="1" fill="#3a5080" />
<rect x="14" y="127" width="1" height="1" fill="#3a5080" />
<rect x="14" y="130" width="1" height="1" fill="#3a5080" />
<rect x="17" y="118" width="1" height="1" fill="#3a5080" />
<rect x="17" y="121" width="1" height="1" fill="#3a5080" />
<rect x="17" y="124" width="1" height="1" fill="#3a5080" />
<rect x="17" y="127" width="1" height="1" fill="#3a5080" />
<rect x="17" y="130" width="1" height="1" fill="#3a5080" />
<rect x="20" y="118" width="1" height="1" fill="#3a5080" />
<rect x="20" y="121" width="1" height="1" fill="#3a5080" />
<rect x="20" y="124" width="1" height="1" fill="#3a5080" />
<rect x="20" y="127" width="1" height="1" fill="#3a5080" />
<rect x="20" y="130" width="1" height="1" fill="#3a5080" />
<rect x="23" y="118" width="1" height="1" fill="#3a5080" />
<rect x="23" y="121" width="1" height="1" fill="#3a5080" />
<rect x="23" y="124" width="1" height="1" fill="#3a5080" />
<rect x="23" y="127" width="1" height="1" fill="#3a5080" />
<rect x="23" y="130" width="1" height="1" fill="#3a5080" />
<path d="M32.0 123.8 L37.0 123.8 L34.5 126.8 Z" fill="#000" shape-rendering="auto"/>
<rect x="44" y="115" width="1" height="20" fill="#8c8c8c" />
<rect x="55" y="129" width="16" height="5" fill="#b4b4b4" />
<path d="M55.8 124 L61.5 119 L67 123.3 L62.3 128.5 Z" fill="url(#gbk)" stroke="#8a8a8a" stroke-width="1" shape-rendering="auto"/>
<path d="M58.5 121.5 Q58.5 116.5 61.5 117 Q63.5 117.5 63 121" stroke="#8a8a8a" stroke-width="1" fill="none" shape-rendering="auto"/>
<path d="M65.5 121 Q69.5 120.5 69 127" stroke="#a0a0a0" stroke-width="1.6" fill="none" shape-rendering="auto"/>
<path d="M77.1 123.8 L82.1 123.8 L79.6 126.8 Z" fill="#909090" shape-rendering="auto"/>
<rect x="92" y="129" width="16" height="5" fill="#b4b4b4" />
<path d="M93.5 123.5 L99 119.5 L102.5 123 L99.5 128 Q96 128 93.5 123.5 Z" fill="url(#gbk)" stroke="#8a8a8a" stroke-width="0.9" shape-rendering="auto"/>
<path d="M100 120.5 L105.5 116 L107.8 118.3 L102 123.3 Z" fill="#d8d8d8" stroke="#8a8a8a" stroke-width="0.9" shape-rendering="auto"/>
<path d="M114.1 123.8 L119.1 123.8 L116.6 126.8 Z" fill="#909090" shape-rendering="auto"/>
<rect x="129" y="129" width="16" height="5" fill="#b4b4b4" />
<rect x="129" y="126" width="13" height="1" fill="#808080" />
<path d="M132 125.5 L140.5 117.3" stroke="#a8a8a8" stroke-width="2.6" stroke-linecap="round" fill="none" shape-rendering="auto"/>
<path d="M132.5 124.5 L140.5 117" stroke="#e0e0e0" stroke-width="0.8" fill="none" shape-rendering="auto"/>
<path d="M151.2 123.8 L156.2 123.8 L153.7 126.8 Z" fill="#909090" shape-rendering="auto"/>
<rect x="167" y="120" width="15" height="1" fill="#505050" />
<rect x="167" y="123" width="1" height="1" fill="#505050" />
<rect x="169" y="123" width="1" height="1" fill="#505050" />
<rect x="171" y="123" width="1" height="1" fill="#505050" />
<rect x="173" y="123" width="1" height="1" fill="#505050" />
<rect x="175" y="123" width="1" height="1" fill="#505050" />
<rect x="177" y="123" width="1" height="1" fill="#505050" />
<rect x="179" y="123" width="1" height="1" fill="#505050" />
<rect x="181" y="123" width="1" height="1" fill="#505050" />
<rect x="167" y="126" width="2" height="1" fill="#505050" />
<rect x="171" y="126" width="2" height="1" fill="#505050" />
<rect x="175" y="126" width="2" height="1" fill="#505050" />
<rect x="179" y="126" width="2" height="1" fill="#505050" />
<rect x="167" y="129" width="2" height="1" fill="#505050" />
<rect x="171" y="129" width="2" height="1" fill="#505050" />
<rect x="176" y="129" width="2" height="1" fill="#505050" />
<rect x="180" y="129" width="1" height="1" fill="#505050" />
<path d="M188.0 123.8 L193.0 123.8 L190.5 126.8 Z" fill="#909090" shape-rendering="auto"/>
<rect x="204" y="120" width="15" height="1" fill="#606060" />
<rect x="204" y="123" width="15" height="2" fill="#606060" />
<rect x="204" y="127" width="15" height="3" fill="#606060" />
<path d="M225.1 123.8 L230.1 123.8 L227.6 126.8 Z" fill="#909090" shape-rendering="auto"/>
<path d="M239.5 122.5 L245.2 117.5 L250.7 121.8 L246 127 Z" fill="url(#gbk)" stroke="#8a8a8a" stroke-width="1" shape-rendering="auto"/>
<path d="M242.2 120 Q242.2 115 245.2 115.5 Q247.2 116 246.7 119.5" stroke="#8a8a8a" stroke-width="1" fill="none" shape-rendering="auto"/>
<path d="M249.2 119.5 Q253.2 119 252.7 125.5" stroke="#a0a0a0" stroke-width="1.6" fill="none" shape-rendering="auto"/>
<rect x="247" y="130" width="2" height="2" fill="#606060" />
<rect x="250" y="130" width="2" height="2" fill="#606060" />
<rect x="253" y="130" width="2" height="2" fill="#606060" />
<rect x="261" y="115" width="1" height="20" fill="#8c8c8c" />
<rect x="273" y="119" width="7" height="6" fill="#d0d0d0" />
<rect x="271" y="117" width="7" height="6" fill="#909090" />
<rect x="280" y="126" width="6" height="6" fill="#909090" />
<path d="M274 131 L286 118.5" stroke="#808080" stroke-width="1" shape-rendering="auto"/>
<rect x="293" y="115" width="1" height="20" fill="#8c8c8c" />
<rect x="306" y="119" width="9" height="9" fill="#d0d0d0" />
<rect x="303" y="122" width="9" height="9" fill="#909090" />
<path d="M316.5 118 V126" stroke="#707070" stroke-dasharray="1 1" fill="none"/>
<path d="M315 119.5 L316.5 117.5 L318 119.5" stroke="#707070" fill="none" shape-rendering="auto"/>
<rect x="330" y="121" width="9" height="9" fill="#d0d0d0" />
<rect x="327" y="118" width="9" height="9" fill="#909090" />
<path d="M340.5 122 V130" stroke="#707070" stroke-dasharray="1 1" fill="none"/>
<path d="M339 128.5 L340.5 130.5 L342 128.5" stroke="#707070" fill="none" shape-rendering="auto"/>
<rect x="353" y="120" width="9" height="9" fill="#d0d0d0" />
<rect x="356" y="117" width="9" height="9" fill="#909090" />
<path d="M353 130.5 H361" stroke="#707070" stroke-dasharray="1 1" fill="none"/>
<path d="M354.5 129 L352.5 130.5 L354.5 132" stroke="#707070" fill="none" shape-rendering="auto"/>
<rect x="379" y="120" width="9" height="9" fill="#d0d0d0" />
<rect x="376" y="117" width="9" height="9" fill="#909090" />
<path d="M376 130.5 H384" stroke="#707070" stroke-dasharray="1 1" fill="none"/>
<path d="M382.5 129 L384.5 130.5 L382.5 132" stroke="#707070" fill="none" shape-rendering="auto"/>
<rect x="397" y="115" width="1" height="20" fill="#8c8c8c" />
<rect x="413" y="120" width="9" height="8" fill="#d0d0d0" />
<rect x="410" y="117" width="9" height="9" fill="#909090" />
<rect x="408" y="129" width="16" height="5" fill="#b4b4b4" />
<path d="M429.6 123.8 L434.6 123.8 L432.1 126.8 Z" fill="#606060" shape-rendering="auto"/>
<rect x="442" y="115" width="1" height="20" fill="#8c8c8c" />
<rect x="450.5" y="114.5" width="116" height="21" fill="#f0f0f0" stroke="#b8b8b8"/>
<rect x="451" y="115" width="116" height="1" fill="#ffffff" />
<rect x="451" y="115" width="1" height="21" fill="#ffffff" />
<rect x="552" y="116" width="14" height="19" fill="#f7f7f7" />
<path d="M555 123.5 L558.3 126.8 L561.6 123.5" stroke="#909090" fill="none" shape-rendering="auto"/>
<rect x="570.5" y="114.5" width="45" height="21" fill="#f0f0f0" stroke="#b8b8b8"/>
<rect x="571" y="115" width="45" height="1" fill="#ffffff" />
<rect x="571" y="115" width="1" height="21" fill="#ffffff" />
<rect x="602" y="116" width="13" height="19" fill="#f7f7f7" />
<path d="M605 123.5 L608.3 126.8 L611.6 123.5" stroke="#909090" fill="none" shape-rendering="auto"/>
<text x="631.2" y="128.5" font-family="Liberation Serif" font-weight="bold" font-size="14" fill="#a0a0a0" text-anchor="middle">A</text>
<rect x="623" y="129" width="16" height="5" fill="#b4b4b4" />
<path d="M645.2 124.0 L650.2 124.0 L647.7 127.0 Z" fill="#606060" shape-rendering="auto"/>
<rect x="12" y="149" width="8" height="1" fill="#6c6c6c" />
<rect x="12" y="157" width="8" height="1" fill="#6c6c6c" />
<rect x="13" y="149" width="3" height="9" fill="#6c6c6c" />
<rect x="16" y="153" width="4" height="1" fill="#6c6c6c" />
<rect x="19" y="150" width="2" height="3" fill="#6c6c6c" />
<rect x="19" y="154" width="2" height="3" fill="#6c6c6c" />
<rect x="20" y="153" width="1" height="1" fill="#a8a8a8" />
<rect x="16" y="152" width="1" height="2" fill="#b0b0b0" />
<path d="M40.2 149.5 H44.8 M36.1 157.5 H41.9 M42.6 149.8 L38.9 157.2" stroke="#6c6c6c" stroke-width="1" fill="none" shape-rendering="auto"/>
<path d="M42.6 149.8 L38.9 157.2" stroke="#6c6c6c" stroke-width="1.9" fill="none" shape-rendering="auto"/>
<rect x="61" y="149" width="4" height="1" fill="#6c6c6c" />
<rect x="66" y="149" width="4" height="1" fill="#6c6c6c" />
<rect x="62" y="150" width="2" height="6" fill="#6c6c6c" />
<rect x="67" y="150" width="2" height="6" fill="#6c6c6c" />
<rect x="63" y="156" width="5" height="1" fill="#6c6c6c" />
<rect x="64" y="157" width="3" height="1" fill="#a0a0a0" />
<rect x="61" y="158" width="10" height="1" fill="#6c6c6c" />
<rect x="79" y="144" width="1" height="20" fill="#8c8c8c" />
<rect x="91" y="150" width="14" height="1" fill="#606060" />
<rect x="114" y="149" width="14" height="1" fill="#606060" />
<rect x="138" y="149" width="14" height="1" fill="#606060" />
<rect x="91" y="152" width="10" height="1" fill="#606060" />
<rect x="116" y="151" width="10" height="1" fill="#606060" />
<rect x="142" y="151" width="10" height="1" fill="#606060" />
<rect x="91" y="154" width="14" height="1" fill="#606060" />
<rect x="114" y="153" width="14" height="1" fill="#606060" />
<rect x="138" y="153" width="14" height="1" fill="#606060" />
<rect x="91" y="156" width="10" height="1" fill="#606060" />
<rect x="116" y="155" width="10" height="1" fill="#606060" />
<rect x="142" y="155" width="10" height="1" fill="#606060" />
<rect x="91" y="158" width="14" height="1" fill="#606060" />
<rect x="114" y="157" width="14" height="1" fill="#606060" />
<rect x="138" y="157" width="14" height="1" fill="#606060" />
<rect x="91" y="160" width="10" height="1" fill="#606060" />
<rect x="116" y="159" width="10" height="1" fill="#606060" />
<rect x="142" y="159" width="10" height="1" fill="#606060" />
<rect x="159" y="144" width="1" height="20" fill="#8c8c8c" />
<rect x="170.5" y="147.5" width="13" height="12" fill="url(#gwin)" stroke="#4a6aa8"/>
<rect x="171" y="148" width="12" height="2" fill="#6a98e0" />
<rect x="177" y="148" width="1" height="1" fill="#f4d040" />
<rect x="179" y="148" width="1" height="1" fill="#e02020" />
<rect x="181" y="148" width="1" height="1" fill="#f4d040" />
<rect x="171" y="159" width="13" height="1" fill="#2a3a60" />
<path d="M179 151 L185.8 156.6 L182 157.2 L179.2 162.5 Z" fill="#2a98f0" shape-rendering="auto"/>
<rect x="191" y="144" width="1" height="20" fill="#8c8c8c" />
<g>
<rect x="124" y="266" width="11" height="10" fill="#3ccfe0" />
<rect x="125" y="267" width="9" height="8" fill="#e4f8fb" />
<rect x="126.8" y="268.8" width="5.6" height="5" rx="1" fill="#7fdce8" stroke="#3ccfe0" stroke-width="1" shape-rendering="auto"/>
<rect x="129" y="271" width="4" height="2" fill="#ffffff" />
<text x="124.5" y="279" font-family="Liberation Sans, sans-serif" font-size="4.2" fill="#f0f4ff" shape-rendering="auto">CLP1</text>
<rect x="30" y="327" width="11" height="10" fill="#3ccfe0" />
<rect x="31.5" y="328.5" width="8" height="7" fill="none" stroke="#e8fcff" stroke-width="1"/>
<path d="M32 329 H39 V331 L36.5 334 V336 H34.5 V334 L32 331 Z" fill="#2ac0d4" shape-rendering="auto"/>
<path d="M32.5 332 V336 H34 Z M38.5 332 V336 H37 Z" fill="#f0ffff" shape-rendering="auto"/>
<text x="27" y="340.5" font-family="Liberation Sans, sans-serif" font-size="4.2" fill="#f0f4ff" shape-rendering="auto">Captação</text>
<rect x="41" y="332" width="23" height="1" fill="#ff0000" />
<rect x="63" y="332" width="6" height="1" fill="#8c8c8c" />
<rect x="77" y="332" width="7" height="1" fill="#8c8c8c" />
<circle cx="73" cy="332.5" r="4" fill="#3ccfe0" shape-rendering="auto"/>
<path d="M72 333.5 L75.5 330.0" stroke="#10304a" stroke-width="1" shape-rendering="auto"/>
<text x="64" y="326" font-family="Liberation Sans, sans-serif" font-size="4.2" fill="#f0f4ff" shape-rendering="auto">VazaoMed1</text>
<rect x="84" y="332" width="32" height="1" fill="#ff0000" />
<rect x="115" y="313" width="1" height="44" fill="#ff0000" />
<rect x="116" y="313" width="5" height="1" fill="#8c8c8c" />
<circle cx="125" cy="313.5" r="4.2" fill="none" stroke="#8c8c8c" stroke-width="1.1" shape-rendering="auto"/>
<path d="M125 309.3 H131.8 V313.5" fill="none" stroke="#8c8c8c" stroke-width="1.1" shape-rendering="auto"/>
<circle cx="125" cy="313.5" r="1.5" fill="none" stroke="#8c8c8c" stroke-width="0.8" shape-rendering="auto"/>
<rect x="131" y="313" width="4" height="1" fill="#8c8c8c" />
<text x="118" y="307" font-family="Liberation Sans, sans-serif" font-size="4.2" fill="#f0f4ff" shape-rendering="auto">Bomba1</text>
<rect x="135" y="313" width="19" height="1" fill="#e00000" />
<rect x="135" y="314" width="19" height="1" fill="#780000" />
<rect x="153" y="313" width="5" height="1" fill="#8c8c8c" />
<path d="M157.5 309.7 L166.5 317.3 L166.5 309.7 L157.5 317.3 Z" fill="none" stroke="#8c8c8c" stroke-width="1" shape-rendering="auto"/>
<path d="M157.5 309.7 L162 313.5 L157.5 317.3 Z" fill="#8c8c8c" shape-rendering="auto"/>
<path d="M162 313.5 V309.0 M160 309.0 H164" stroke="#8c8c8c" stroke-width="1" shape-rendering="auto"/>
<rect x="167" y="313" width="6" height="1" fill="#8c8c8c" />
<text x="153" y="307" font-family="Liberation Sans, sans-serif" font-size="4.2" fill="#f0f4ff" shape-rendering="auto">Válvula1</text>
<rect x="172" y="313" width="19" height="1" fill="#e00000" />
<rect x="172" y="314" width="19" height="1" fill="#780000" />
<rect x="190" y="313" width="7" height="1" fill="#8c8c8c" />
<circle cx="200.7" cy="313.6" r="4" fill="#3ccfe0" shape-rendering="auto"/>
<path d="M199.7 314.6 L203.2 311.1" stroke="#10304a" stroke-width="1" shape-rendering="auto"/>
<rect x="205" y="313" width="7" height="1" fill="#8c8c8c" />
<text x="191" y="306.5" font-family="Liberation Sans, sans-serif" font-size="4.2" fill="#f0f4ff" shape-rendering="auto">Barrilete</text>
<rect x="211" y="313" width="47" height="1" fill="#e00000" />
<rect x="211" y="314" width="47" height="1" fill="#780000" />
<rect x="256" y="267" width="1" height="47" fill="#780000" />
<rect x="257" y="267" width="1" height="47" fill="#e00000" />
<rect x="257" y="266" width="5" height="1" fill="#8c8c8c" />
<rect x="261.7" y="261.5" width="9.8" height="9.8" rx="1.5" fill="#062a30" stroke="#38c4d4" stroke-width="1.5" shape-rendering="auto"/>
<rect x="263" y="264" width="7" height="5" fill="#3ccfe0" />
<rect x="263" y="264" width="7" height="1" fill="#c8f8ff" />
<rect x="272" y="266" width="5" height="1" fill="#8c8c8c" />
<text x="259" y="258.5" font-family="Liberation Sans, sans-serif" font-size="4.2" fill="#f0f4ff" shape-rendering="auto">Tanque1</text>
<rect x="276" y="266" width="20" height="1" fill="#ff0000" />
<rect x="294" y="266" width="1" height="14" fill="#780000" />
<rect x="295" y="266" width="1" height="14" fill="#e00000" />
<rect x="294" y="280" width="1" height="6" fill="#8c8c8c" />
<rect x="295" y="280" width="1" height="6" fill="#8c8c8c" />
<circle cx="294.9" cy="289.8" r="4" fill="#3ccfe0" shape-rendering="auto"/>
<path d="M293.9 290.8 L297.4 287.3" stroke="#10304a" stroke-width="1" shape-rendering="auto"/>
<rect x="294" y="294" width="1" height="6" fill="#8c8c8c" />
<rect x="295" y="294" width="1" height="6" fill="#8c8c8c" />
<text x="299" y="291" font-family="Liberation Sans, sans-serif" font-size="4.2" fill="#f0f4ff" shape-rendering="auto">VazaoMed3</text>
<rect x="294" y="300" width="1" height="10" fill="#780000" />
<rect x="295" y="300" width="1" height="10" fill="#e00000" />
<rect x="294" y="308" width="48" height="1" fill="#e00000" />
<rect x="294" y="309" width="48" height="1" fill="#780000" />
<rect x="341" y="290" width="1" height="19" fill="#780000" />
<rect x="342" y="290" width="1" height="19" fill="#e00000" />
<rect x="341" y="285" width="1" height="6" fill="#8c8c8c" />
<rect x="342" y="285" width="1" height="6" fill="#8c8c8c" />
<circle cx="342" cy="280.3" r="4" fill="#3ccfe0" shape-rendering="auto"/>
<path d="M341 281.3 L344.5 277.8" stroke="#10304a" stroke-width="1" shape-rendering="auto"/>
<text x="326" y="281" font-family="Liberation Sans, sans-serif" font-size="4.2" fill="#f0f4ff" shape-rendering="auto">PCP1</text>
<rect x="341" y="310" width="1" height="4" fill="#8c8c8c" />
<path d="M336 318 V313.5 H348.5 V318 M342 313.5 V318" stroke="#3ccfe0" stroke-width="1.2" fill="none" shape-rendering="auto"/>
<circle cx="336" cy="318.3" r="2.4" fill="#3ccfe0" shape-rendering="auto"/>
<circle cx="342.2" cy="318.3" r="2.4" fill="#3ccfe0" shape-rendering="auto"/>
<circle cx="348.2" cy="318.3" r="2.4" fill="#3ccfe0" shape-rendering="auto"/>
<text x="333" y="326" font-family="Liberation Sans, sans-serif" font-size="4.2" fill="#f0f4ff" shape-rendering="auto">GrupoCons</text>
<rect x="116" y="356" width="5" height="1" fill="#8c8c8c" />
<circle cx="125" cy="356" r="4.2" fill="none" stroke="#8c8c8c" stroke-width="1.1" shape-rendering="auto"/>
<path d="M125 351.8 H131.8 V356" fill="none" stroke="#8c8c8c" stroke-width="1.1" shape-rendering="auto"/>
<circle cx="125" cy="356" r="1.5" fill="none" stroke="#8c8c8c" stroke-width="0.8" shape-rendering="auto"/>
<rect x="131" y="356" width="4" height="1" fill="#8c8c8c" />
<text x="118" y="349.5" font-family="Liberation Sans, sans-serif" font-size="4.2" fill="#f0f4ff" shape-rendering="auto">Bomba2</text>
<rect x="135" y="356" width="14" height="1" fill="#e00000" />
<rect x="135" y="357" width="14" height="1" fill="#780000" />
<rect x="148" y="356" width="5" height="1" fill="#8c8c8c" />
<path d="M153.0 352.2 L162.0 359.8 L162.0 352.2 L153.0 359.8 Z" fill="none" stroke="#8c8c8c" stroke-width="1" shape-rendering="auto"/>
<path d="M153.0 352.2 L157.5 356 L153.0 359.8 Z" fill="#8c8c8c" shape-rendering="auto"/>
<path d="M157.5 356 V351.5 M155.5 351.5 H159.5" stroke="#8c8c8c" stroke-width="1" shape-rendering="auto"/>
<rect x="163" y="356" width="6" height="1" fill="#8c8c8c" />
<text x="148" y="349.5" font-family="Liberation Sans, sans-serif" font-size="4.2" fill="#f0f4ff" shape-rendering="auto">Válvula2</text>
<rect x="168" y="356" width="23" height="1" fill="#e00000" />
<rect x="168" y="357" width="23" height="1" fill="#780000" />
<rect x="190" y="356" width="7" height="1" fill="#8c8c8c" />
<circle cx="200.7" cy="356" r="4" fill="#3ccfe0" shape-rendering="auto"/>
<path d="M199.7 357 L203.2 353.5" stroke="#10304a" stroke-width="1" shape-rendering="auto"/>
<rect x="205" y="356" width="7" height="1" fill="#8c8c8c" />
<text x="191" y="349.5" font-family="Liberation Sans, sans-serif" font-size="4.2" fill="#f0f4ff" shape-rendering="auto">Barrilete</text>
<rect x="211" y="356" width="47" height="1" fill="#e00000" />
<rect x="211" y="357" width="47" height="1" fill="#780000" />
<rect x="257" y="351" width="11" height="10" fill="#3ccfe0" />
<rect x="258.5" y="352.5" width="8" height="7" fill="none" stroke="#e8fcff" stroke-width="1"/>
<path d="M262.5 353 Q260.5 356 260.8 357.5 Q261 359 262.5 359 Q264 359 264.2 357.5 Q264.5 356 262.5 353 Z" fill="#f0ffff" shape-rendering="auto"/>
<text x="252" y="364.5" font-family="Liberation Sans, sans-serif" font-size="4.2" fill="#f0f4ff" shape-rendering="auto">Reservatorio</text>
</g>
</svg>
</body></html>
